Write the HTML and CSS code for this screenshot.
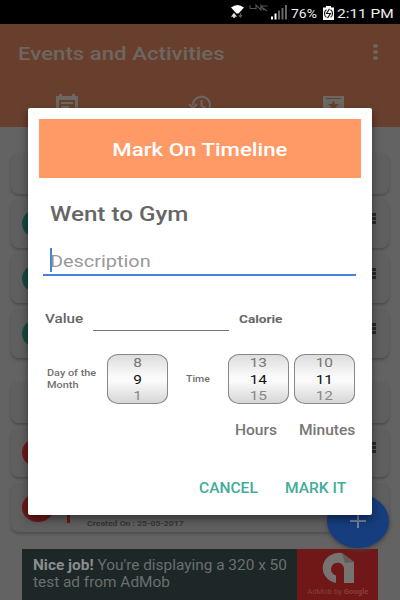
FILE: index.html
```html
<!DOCTYPE html>
<html lang="en">
<head>
<meta charset="utf-8">
<title>Events and Activities</title>
<link rel="stylesheet" href="styles.css">
</head>
<body>
<div class="screen">
  <div class="status">
    <svg class="sys" width="61" height="24" viewBox="0 0 61 24">
      <path d="M1 7.500Q7.500 2.500 14 7.500L8.500 13.500h-2z" fill="#fff"/>
      <path d="M4 18v-3.500M2.500 16L4 14l1.500 2z" stroke="#ddd" stroke-width="1.500" fill="#ddd"/>
      <path d="M10.500 13v4M9 15.500l1.500 2 1.500-2z" stroke="#555" stroke-width="1" fill="#555"/>
      <path d="M20 5v3.500h5.500M26 9.500V5l5 5V5.500l3 5M32 6h5.500M33 8l4 3" stroke="#555" stroke-width="1.100" fill="none"/>
      <path d="M41 19.500v-3h2v3zM44.500 19.500v-6h2v6z" fill="#fff"/>
      <path d="M48 19.500v-9h2v9zM51.500 19.500V8h2v11.500zM55 19.500V5h2v14.500z" fill="#666"/>
    </svg>
    <span class="t pct">76%</span>
    <svg class="batt" width="11" height="14" viewBox="0 0 11 15" preserveAspectRatio="none">
      <path d="M0 1.500h3V0h5v1.500h3V15H0z" fill="#fff"/>
      <path d="M3.500 4Q1.500 5 1.500 8t2 4M7.500 4q2 1 2 4t-2 4M6.500 3L3.500 8h4l-3 5" fill="none" stroke="#111" stroke-width="1.100"/>
    </svg>
    <span class="t clock">2:11 PM</span>
  </div>
  <header class="bar">
    <div class="bar-row"><span class="t bar-title">Events and Activities</span><span class="more"><i></i><i></i><i></i></span></div>
    <div class="tabs">
      <svg width="22" height="20" viewBox="0 0 22 20"><path d="M0 2h3V0h3v2h10V0h3v2h3v18H0zM3 6v12h16V6zM5 8h12v2H5zM5 12h8v2H5z" fill="#6b6763" fill-rule="evenodd"/></svg>
      <svg width="24" height="20" viewBox="0 0 24 20"><path d="M5 11A8.500 8 0 1 1 9 17.500M1 10l4 4 4-4M13.500 6v6l4 2" fill="none" stroke="#6b6763" stroke-width="2"/></svg>
      <svg width="21" height="20" viewBox="0 0 21 20"><path d="M0 2h21v18H0zM3 4v1h15V4zM10.500 6.500L9 10H5l3.500 3L7 17l3.500-2.500L14 17l-1.500-4L16 10h-4z" fill="#6b6763" fill-rule="evenodd"/></svg>
    </div>
  </header>
  <main class="list">
    <div class="card head"></div>
    <div class="card"><b class="dot green"></b><span class="kebab"><i></i><i></i><i></i></span></div>
    <div class="card"><b class="dot green"></b><span class="kebab"><i></i><i></i><i></i></span></div>
    <div class="card"><b class="dot green"></b><span class="kebab"><i></i><i></i><i></i></span></div>
    <div class="card head second"></div>
    <div class="card"><b class="dot red"></b><span class="kebab"><i></i><i></i><i></i></span></div>
    <div class="card"><b class="dot red"></b><span class="stripe"></span><span class="t created">Created On : 25-05-2017</span></div>
  </main>
  <div class="ad">
    <div class="ad-text"><strong>Nice job!</strong> You're displaying a 320 x 50<br>test ad from AdMob</div>
    <div class="ad-logo">
      <svg width="34" height="32" viewBox="0 0 34 32"><path d="M21 1L33 10V31H23V18A6.500 6.500 0 1 0 15 23.500V31A16 15 0 1 1 21 1z" fill="#777373"/><path d="M21 1L33 10 24 11z" fill="#625b5b"/></svg>
      <span class="t admob">AdMob by <strong>Google</strong></span>
    </div>
  </div>
  <div class="fab"><svg width="16" height="14" viewBox="0 0 16 14"><path d="M8 0v14M0 7h16" stroke="#72809a" stroke-width="2"/></svg></div>

  <section class="dialog">
    <h1 class="dialog-title"><span class="t">Mark On Timeline</span></h1>
    <h2 class="event"><span class="t">Went to Gym</span></h2>
    <div class="desc"><i class="caret"></i><span class="t">Description</span></div>
    <div class="value-row"><span class="t value">Value</span><div class="field"></div><span class="t unit">Calorie</span></div>
    <div class="pick-row">
      <div class="small day"><span class="t">Day of the<br>Month</span></div>
      <div class="picker"><span class="t">8</span><span class="t now">9</span><span class="t low">1</span></div>
      <div class="small time"><span class="t">Time</span></div>
      <div class="picker"><span class="t">13</span><span class="t now">14</span><span class="t low">15</span></div>
      <div class="picker last"><span class="t">10</span><span class="t now">11</span><span class="t low">12</span></div>
    </div>
    <div class="units"><span class="t hours">Hours</span><span class="t">Minutes</span></div>
    <div class="actions"><span class="t cancel">CANCEL</span><span class="t">MARK IT</span></div>
  </section>
</div>
</body>
</html>
```
FILE: styles.css
```css
* { box-sizing: border-box; }
body { margin: 0; font-family: Roboto, "Liberation Sans", sans-serif; }
.screen { position: relative; width: 400px; height: 600px; overflow: hidden; background: #636363; display: flex; flex-direction: column; }
.t { display: inline-block; white-space: nowrap; transform: scaleX(1.185); transform-origin: left center; }

.status { height: 24px; flex: none; background: #000; color: #eee; display: flex; align-items: center; padding-left: 230px; font-size: 13.5px; line-height: 24px; padding-top: 2px; }
.sys { flex: none; margin-top: -2px; }
.pct { width: 32px; font-size: 13.5px; transform: scaleX(1.03); }
.batt { flex: none; margin: -1px 3px 0 0; }
.clock { transform: scaleX(1.14); }

.bar { height: 103px; flex: none; background: #683f2d; }
.bar-row { height: 58px; padding: 0 22px 0 18px; display: flex; align-items: center; justify-content: space-between; }
.bar-title { font-size: 18.75px; font-weight: 500; color: #6e6661; padding-top: 1px; }
.more { display: flex; flex-direction: column; gap: 2px; margin-top: -2px; }
.more i { width: 5px; height: 4px; border-radius: 50%; background: #6e6661; }
.tabs { display: grid; grid-template-columns: repeat(3, 1fr); justify-items: center; padding-top: 12px; }

.list { height: 422px; flex: none; padding: 26px 11px 0; }
.card { height: 49px; margin-bottom: 6px; border-radius: 8px; background: #5f5f5f; box-shadow: 0 2px 3px #4c4c4c; display: flex; align-items: center; padding-left: 11px; }
.card.head { height: 41px; margin-bottom: 5px; }
.card.second { margin: 24px 0 5px; }
.dot { width: 32px; height: 29px; border-radius: 50%; flex: none; }
.green { background: #164a3e; }
.red { background: #6b1819; }
.kebab { margin-left: auto; margin-right: 13px; margin-top: -10px; display: flex; flex-direction: column; gap: 1px; }
.kebab i { width: 4px; height: 3px; background: #292929; }
.stripe { width: 3px; height: 31px; margin: 0 17px 0 13px; background: #6b1819; }
.created { font-size: 8px; font-weight: 700; color: #353535; padding-top: 31px; transform: scaleX(1.08); }

.ad { height: 51px; flex: none; margin: 0 22px; display: flex; background: #1d2728; }
.ad-text { width: 275px; padding: 8px 0 0 11px; font-size: 15.4px; line-height: 17px; color: #69706f; white-space: nowrap; }
.ad-text strong { color: #898d8d; }
.ad-logo { flex: 1; background: #701717; display: flex; flex-direction: column; align-items: center; padding-top: 3px; }
.admob { font-size: 6.5px; line-height: 10px; margin-top: 3px; color: #873f3f; transform-origin: center; }

.fab { position: absolute; left: 327px; top: 494px; width: 62px; height: 54px; border-radius: 50%; background: #163d7e; box-shadow: 0 2px 4px #444; display: flex; align-items: center; justify-content: center; }

.dialog { position: absolute; left: 28px; top: 108px; width: 344px; height: 407px; background: #fff; border-radius: 2px; padding: 11px 11px 0; box-shadow: 0 4px 9px rgba(0,0,0,.45); color: #666; }
.dialog-title { margin: 0; height: 59px; background: #ff9966; color: #fff; font-size: 18.75px; font-weight: 500; line-height: 62px; text-align: center; }
.dialog-title .t { transform-origin: center; }
.event { margin: 23px 0 0 11px; font-size: 20.6px; line-height: 26px; font-weight: 500; }
.event .t { transform: scaleX(1.175); }
.desc { margin: 20px 5px 0 4px; height: 29px; border-bottom: 2px solid #4a7fdb; padding-left: 7px; font-size: 17px; line-height: 28px; color: #999; display: flex; align-items: flex-start; }
.desc .t { transform: scaleX(1.17); }
.caret { width: 2px; height: 24px; margin: 1px -2px 0 0; background: #4a7fdb; }
.value-row { height: 30px; margin: 28px 0 0 6px; display: flex; line-height: 28px; }
.value { width: 48px; font-size: 13.5px; font-weight: 500; transform: scaleX(1.13); }
.field { width: 136px; height: 27px; border-bottom: 1px solid #777; margin-right: 10px; }
.unit { font-size: 11.5px; font-weight: 700; padding-top: 1px; }
.pick-row { margin-top: 20px; height: 50px; display: flex; align-items: center; }
.small { font-size: 9.2px; line-height: 12px; font-weight: 500; color: #707070; }
.day { width: 68px; padding-left: 8px; }
.time { width: 60px; padding-left: 18px; }
.time .t { transform: scaleX(1.14); }
.picker { width: 61px; height: 50px; border: 1.5px solid #888; border-radius: 11px / 10px; background: linear-gradient(#ddd, #fafafa 45%, #fafafa 55%, #d6d6d6); display: flex; flex-direction: column; align-items: center; overflow: hidden; font-size: 13px; line-height: 16.5px; color: #777; }
.picker .t { transform-origin: center; }
.picker .now { color: #111; }
.picker .low { color: #888; }
.last { margin-left: 5px; }
.units { margin-top: 17px; padding-left: 196px; display: flex; font-size: 14px; line-height: 18px; font-weight: 500; color: #777; }
.units .t { transform: scaleX(1.11); }
.hours { width: 64px; }
.actions { margin-top: 40px; padding-left: 160px; display: flex; font-size: 14px; line-height: 18px; font-weight: 500; color: #41ad97; }
.actions .t { transform: scaleX(1.11); }
.cancel { width: 86px; }
```
